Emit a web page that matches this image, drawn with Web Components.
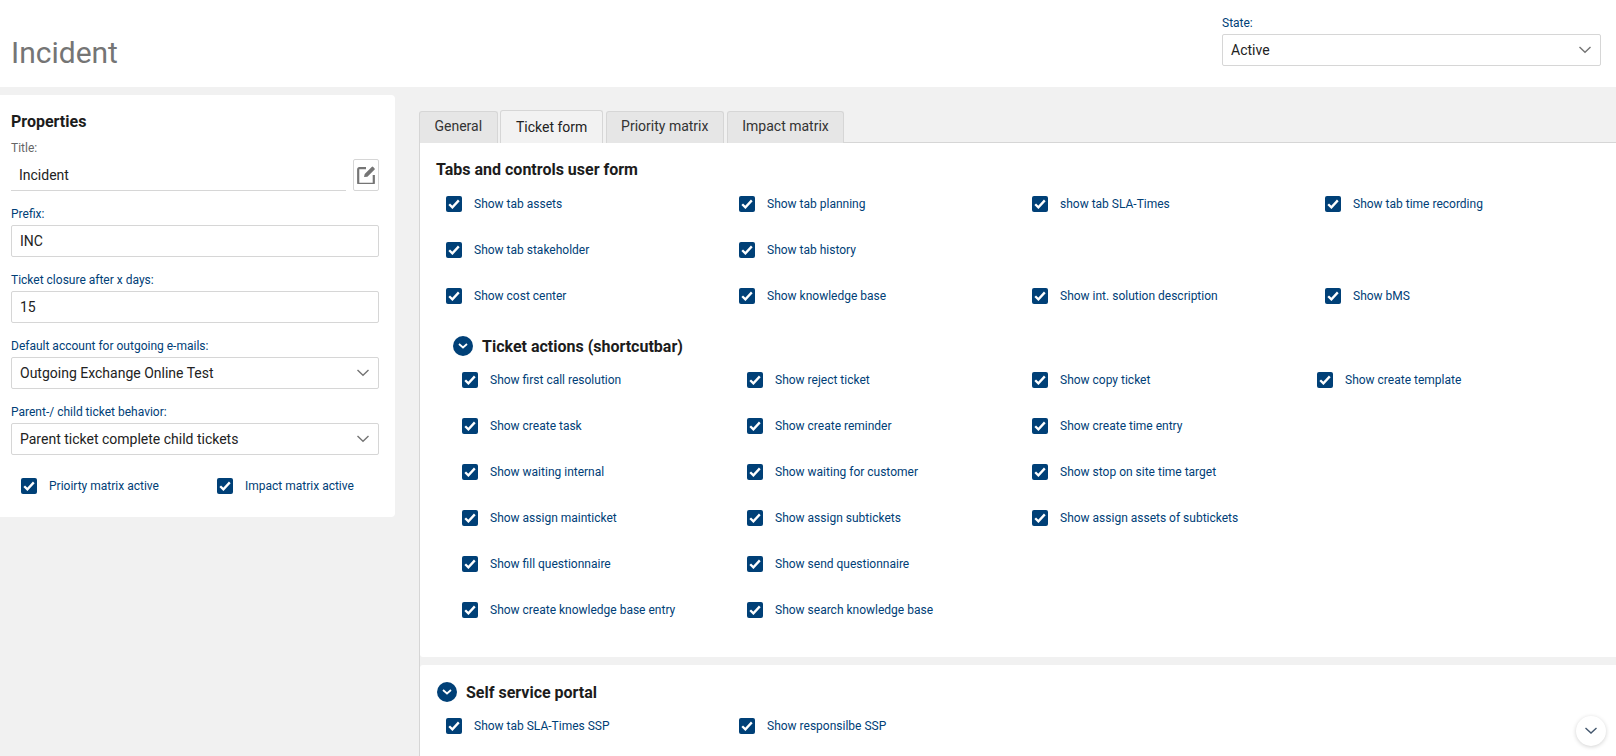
<!DOCTYPE html>
<html>
<head>
<meta charset="utf-8">
<title>Incident</title>
<style>
  html, body { margin: 0; height: 756px; overflow: hidden; background: #f1f1f1; font-family: Roboto, sans-serif; }
</style>
</head>
<body>
<ticket-page></ticket-page>

<template id="check-list-tabs">
  <check-box>Show tab assets</check-box>
  <check-box>Show tab planning</check-box>
  <check-box>show tab SLA-Times</check-box>
  <check-box>Show tab time recording</check-box>
  <check-box>Show tab stakeholder</check-box>
  <check-box>Show tab history</check-box>
  <span></span><span></span>
  <check-box>Show cost center</check-box>
  <check-box>Show knowledge base</check-box>
  <check-box>Show int. solution description</check-box>
  <check-box>Show bMS</check-box>
</template>

<script>
  (function ticketForm(customElements) {
    'use strict';

    const CHEVRON = `<svg width="14" height="8" viewBox="0 0 14 8"><path d="M1.5 1l5.5 5.2L12.5 1" fill="none" stroke="#757575" stroke-width="1.4"/></svg>`;

    class FormField extends HTMLElement {
      constructor() {
        super();
        const shadowRoot = this.attachShadow({ mode: 'open' });
        shadowRoot.innerHTML = `
          <style>
            :host { display: block; }
            label { display: block; height: 18px; margin-bottom: 3px; line-height: 20px; font-size: 12px; color: #004077; }
            :host([muted]) label { color: #666; }
            .box {
              box-sizing: border-box; height: 32px; display: flex; align-items: center; justify-content: space-between;
              padding: 0 8px; background: #fff; border: 1px solid #d6d6d6; border-radius: 2px;
              font-size: 14px; color: #222;
            }
            :host([underline]) .box { border-width: 0 0 1px; border-radius: 0; }
          </style>
          <label>${this.getAttribute('label')}</label>
          <div class="box"><span><slot></slot></span>${this.hasAttribute('select') ? CHEVRON : ''}</div>
        `;
      }
    }

    class CheckBox extends HTMLElement {
      constructor() {
        super();
        const shadowRoot = this.attachShadow({ mode: 'open' });
        shadowRoot.innerHTML = `
          <style>
            :host { display: flex; align-items: center; gap: 12px; height: 16px; font-size: 12px; color: #004077; white-space: nowrap; }
            i { flex: none; width: 16px; height: 16px; border-radius: 2px; background: #004077; display: flex; align-items: center; justify-content: center; }
          </style>
          <i><svg width="12" height="10" viewBox="0 0 12 10"><path d="M1.2 5.2l3.2 3.2 6.4-7" fill="none" stroke="#fff" stroke-width="2.3"/></svg></i>
          <span><slot></slot></span>
        `;
      }
    }

    class CollapseHead extends HTMLElement {
      constructor() {
        super();
        const shadowRoot = this.attachShadow({ mode: 'open' });
        shadowRoot.innerHTML = `
          <style>
            :host { display: flex; align-items: center; gap: 9px; height: 20px; font-size: 16px; font-weight: 700; color: #1c1c1c; }
            i { width: 20px; height: 20px; border-radius: 50%; background: #004077; display: flex; align-items: center; justify-content: center; }
          </style>
          <i><svg width="10" height="6" viewBox="0 0 10 6"><path d="M1 1l4 3.5L9 1" fill="none" stroke="#fff" stroke-width="1.8"/></svg></i>
          <span><slot></slot></span>
        `;
      }
    }

    class TabStrip extends HTMLElement {
      constructor() {
        super();
        const shadowRoot = this.attachShadow({ mode: 'open' });
        const tabs = this.getAttribute('tabs').split('|');
        const active = this.getAttribute('active');
        shadowRoot.innerHTML = `
          <style>
            :host { display: flex; align-items: flex-end; gap: 2.8px; height: 33px; }
            div {
              box-sizing: border-box; height: 32px; padding: 0 14.5px; line-height: 29px; font-size: 14px; color: #333;
              background: #e6e6e6; border: 1px solid #d6d6d6; border-bottom: 0; border-radius: 3px 3px 0 0;
            }
            div.on { height: 33px; line-height: 33px; background: #f2f2f2; color: #222; }
            b { flex: 1; height: 1px; margin-left: -2.8px; background: #d6d6d6; }
          </style>
          ${tabs.map(t => `<div class="${t === active ? 'on' : ''}">${t}</div>`).join('')}<b></b>
        `;
      }
    }

    class CheckGrid extends HTMLElement {
      constructor() {
        super();
        const shadowRoot = this.attachShadow({ mode: 'open' });
        shadowRoot.innerHTML = `
          <style>
            :host { display: grid; grid-template-columns: repeat(4, var(--col, 293px)); row-gap: 30px; }
          </style>
          <slot></slot>
        `;
      }
    }

    class TicketPage extends HTMLElement {
      constructor() {
        super();
        const shadowRoot = this.attachShadow({ mode: 'open' });
        const actions = [
          'Show first call resolution', 'Show reject ticket', 'Show copy ticket', 'Show create template',
          'Show create task', 'Show create reminder', 'Show create time entry', '',
          'Show waiting internal', 'Show waiting for customer', 'Show stop on site time target', '',
          'Show assign mainticket', 'Show assign subtickets', 'Show assign assets of subtickets', '',
          'Show fill questionnaire', 'Show send questionnaire', '', '',
          'Show create knowledge base entry', 'Show search knowledge base', '', ''
        ];
        shadowRoot.innerHTML = `
          <style>
            :host { display: block; height: 756px; overflow: hidden; position: relative; }
            header { height: 87px; box-sizing: border-box; background: #fff; display: flex; justify-content: space-between; padding: 0 15px 0 11px; }
            h1 { margin: 36px 0 0; font-size: 30px; line-height: 34px; font-weight: 400; color: #757575; }
            .state { width: 379px; padding-top: 13px; }
            .body { display: flex; align-items: flex-start; height: 669px; }
            .props {
              box-sizing: border-box; width: 395px; height: 422px; margin-top: 8px; padding: 17px 16px 0 11px;
              background: #fff; border-radius: 0 4px 4px 0; display: flex; flex-direction: column;
            }
            h2 { margin: 0; font-size: 16px; line-height: 20px; font-weight: 700; color: #1c1c1c; }
            .props form-field { margin-top: 13px; }
            .props h2 + .title { margin-top: 6px; }
            .title { display: flex; gap: 7px; align-items: flex-end; }
            .title form-field { flex: 1; margin: 0; }
            .edit {
              box-sizing: border-box; width: 26px; height: 32px; background: #fff; border: 1px solid #d6d6d6; border-radius: 2px;
              display: flex; align-items: center; justify-content: center;
            }
            .flags { display: flex; margin: 23px 0 0 10px; }
            .flags check-box { flex: none; width: 196px; }
            main { flex: 1; margin: 23px 15px 0 24px; }
            .panel { border-left: 1px solid #d6d6d6; border-right: 1px solid #d6d6d6; background: #f1f1f1; height: 700px; }
            section { background: #fff; padding: 16px 0 0 16px; }
            section.first { height: 514px; padding-top: 17px; box-sizing: border-box; border-radius: 0 0 3px 3px; margin-bottom: 8px; }
            section.second { height: 200px; border-radius: 3px 3px 0 0; padding-top: 17px; }
            h3 { margin: 0 0 16px; font-size: 16px; line-height: 20px; font-weight: 700; color: #1c1c1c; }
            .grid1 { margin-left: 10px; }
            .sub { margin: 32px 0 0 17px; }
            .grid2 { margin: 16px 0 0 26px; --col: 285px; }
            .second collapse-head { margin-left: 1px; }
            .grid3 { margin: 16px 0 0 10px; }
            .down {
              position: absolute; left: 1576px; top: 716px; width: 30px; height: 30px; border-radius: 50%; background: #fff;
              box-shadow: 0 1px 4px rgba(0,0,0,.18); display: flex; align-items: center; justify-content: center;
            }
          </style>
          <header>
            <h1>Incident</h1>
            <div class="state"><form-field label="State:" select>Active</form-field></div>
          </header>
          <div class="body">
            <aside class="props">
              <h2>Properties</h2>
              <div class="title">
                <form-field label="Title:" underline muted>Incident</form-field>
                <div class="edit"><svg width="18" height="18" viewBox="0 0 18 18"><path d="M9 2.2H2.2a1 1 0 0 0-1 1v13.6a1 1 0 0 0 1 1h13.6a1 1 0 0 0 1-1V9" fill="none" stroke="#757575" stroke-width="2.2"/><path d="M7 11l.7-3 7-7a1 1 0 0 1 1.5 0l1.2 1.2a1 1 0 0 1 0 1.5l-7 7z" fill="#757575"/></svg></div>
              </div>
              <form-field label="Prefix:">INC</form-field>
              <form-field label="Ticket closure after x days:">15</form-field>
              <form-field label="Default account for outgoing e-mails:" select>Outgoing Exchange Online Test</form-field>
              <form-field label="Parent-/ child ticket behavior:" select>Parent ticket complete child tickets</form-field>
              <div class="flags">
                <check-box>Prioirty matrix active</check-box>
                <check-box>Impact matrix active</check-box>
              </div>
            </aside>
            <main>
              <tab-strip tabs="General|Ticket form|Priority matrix|Impact matrix" active="Ticket form"></tab-strip>
              <div class="panel">
                <section class="first">
                  <h3>Tabs and controls user form</h3>
                  <check-grid class="grid1" id="tabs"></check-grid>
                  <collapse-head class="sub">Ticket actions (shortcutbar)</collapse-head>
                  <check-grid class="grid2">
                    ${actions.map(a => a ? `<check-box>${a}</check-box>` : '<span></span>').join('')}
                  </check-grid>
                </section>
                <section class="second">
                  <collapse-head>Self service portal</collapse-head>
                  <check-grid class="grid3">
                    <check-box>Show tab SLA-Times SSP</check-box>
                    <check-box>Show responsilbe SSP</check-box>
                  </check-grid>
                </section>
              </div>
            </main>
          </div>
          <div class="down"><svg width="14" height="8" viewBox="0 0 14 8"><path d="M1.5 1l5.5 5 5.5-5" fill="none" stroke="#44586e" stroke-width="1.4"/></svg></div>
        `;
        const list = document.getElementById('check-list-tabs').content.cloneNode(true);
        shadowRoot.getElementById('tabs').appendChild(list);
      }
    }

    customElements.define('form-field', FormField);
    customElements.define('check-box', CheckBox);
    customElements.define('collapse-head', CollapseHead);
    customElements.define('tab-strip', TabStrip);
    customElements.define('check-grid', CheckGrid);
    customElements.define('ticket-page', TicketPage);
  })(window.customElements)
</script>
</body>
</html>
